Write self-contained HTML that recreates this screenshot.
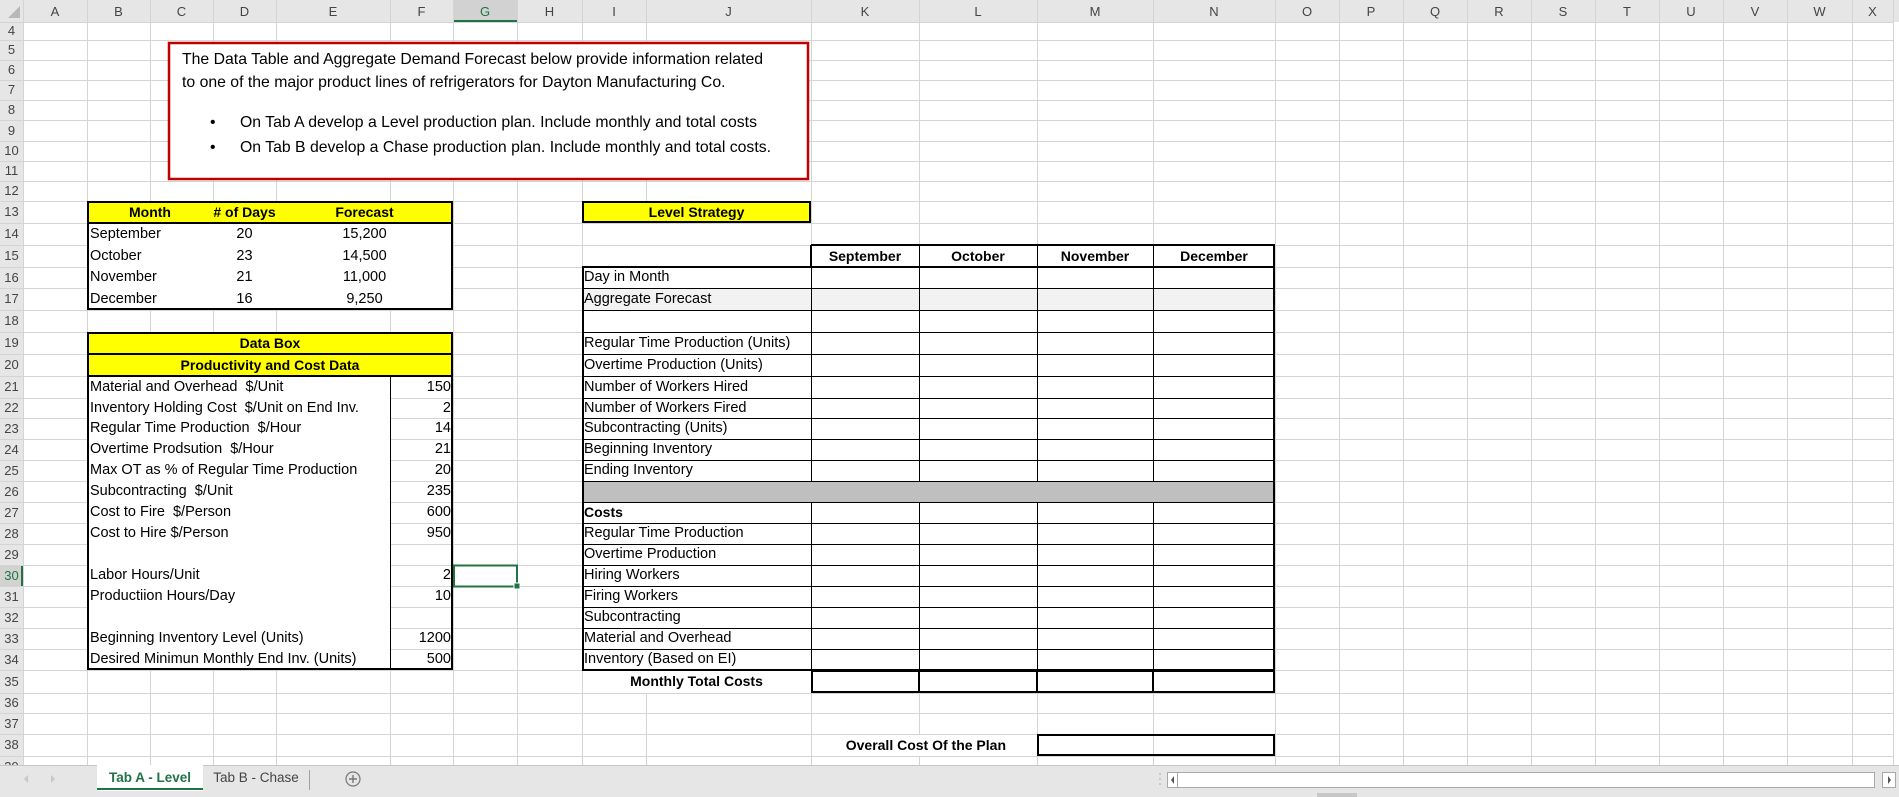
<!DOCTYPE html>
<html><head><meta charset="utf-8">
<style>
*{margin:0;padding:0;box-sizing:border-box}
body{width:1899px;height:797px;overflow:hidden;background:#fff;font-family:"Liberation Sans",Arial,sans-serif;position:relative;color:#000}
.t{position:absolute;white-space:nowrap;font-size:14.5px}
.c{text-align:center}
.r{text-align:right}
.b{font-weight:bold;font-size:14px}
.h{position:absolute;font-size:13px;color:#444;text-align:center;white-space:nowrap}
.x{font-size:15.8px}
</style></head><body>
<svg width="1899" height="797" style="position:absolute;left:0;top:0">
<rect x="0" y="0" width="1899" height="22" fill="#e6e6e6"/>
<rect x="0" y="0" width="23" height="765" fill="#e6e6e6"/>
<rect x="453" y="0" width="64" height="22" fill="#d2d2d2"/>
<rect x="453" y="20" width="64" height="2" fill="#217346"/>
<rect x="0" y="565" width="23" height="21" fill="#d2d2d2"/>
<rect x="21" y="565" width="2" height="21" fill="#217346"/>
<polygon points="8,18 20,18 20,6" fill="#b8b8b8"/>
<g stroke="#d4d4d4" stroke-width="1">
<path d="M23.5 0V765 M87.5 0V765 M150.5 0V765 M213.5 0V765 M276.5 0V765 M390.5 0V765 M453.5 0V765 M517.5 0V765 M582.5 0V765 M646.5 0V765 M811.5 0V765 M919.5 0V765 M1037.5 0V765 M1153.5 0V765 M1275.5 0V765 M1339.5 0V765 M1403.5 0V765 M1467.5 0V765 M1531.5 0V765 M1595.5 0V765 M1659.5 0V765 M1723.5 0V765 M1787.5 0V765 M1852.5 0V765 M1893.5 0V765"/>
<path d="M0 22.5H1893 M0 40.5H1893 M0 60.5H1893 M0 80.5H1893 M0 100.5H1893 M0 120.5H1893 M0 141.5H1893 M0 161.5H1893 M0 181.5H1893 M0 201.5H1893 M0 223.5H1893 M0 245.5H1893 M0 267.5H1893 M0 288.5H1893 M0 310.5H1893 M0 332.5H1893 M0 354.5H1893 M0 376.5H1893 M0 398.5H1893 M0 418.5H1893 M0 439.5H1893 M0 460.5H1893 M0 481.5H1893 M0 502.5H1893 M0 523.5H1893 M0 544.5H1893 M0 565.5H1893 M0 586.5H1893 M0 607.5H1893 M0 628.5H1893 M0 649.5H1893 M0 670.5H1893 M0 693.5H1893 M0 713.5H1893 M0 734.5H1893 M0 756.5H1893"/>
</g>
<rect x="88" y="224" width="365" height="86" fill="#fff"/>
<rect x="88" y="377" width="302" height="293" fill="#fff"/>
<rect x="168" y="42" width="641" height="138" fill="#fff"/>
<rect x="583" y="268" width="692" height="402" fill="#fff"/>
<rect x="583" y="246" width="228" height="21" fill="#fff"/>
<rect x="583" y="224" width="228" height="21" fill="#fff"/>
<rect x="583" y="671" width="228" height="22" fill="#fff"/>
<rect x="820" y="735" width="217" height="21" fill="#fff"/>
<rect x="87" y="201" width="366" height="22" fill="#ffff00"/>
<rect x="87" y="332" width="366" height="44" fill="#ffff00"/>
<rect x="582" y="201" width="229" height="22" fill="#ffff00"/>
<rect x="582" y="288" width="693" height="22" fill="#f2f2f2"/>
<rect x="582" y="481" width="693" height="21" fill="#bfbfbf"/>
<g stroke="#000" stroke-width="1">
<path d="M582 288.5H1275 M582 310.5H1275 M582 332.5H1275 M582 354.5H1275 M582 376.5H1275 M582 398.5H1275 M582 418.5H1275 M582 439.5H1275 M582 460.5H1275 M582 481.5H1275 M582 502.5H1275 M582 523.5H1275 M582 544.5H1275 M582 565.5H1275 M582 586.5H1275 M582 607.5H1275 M582 628.5H1275 M582 649.5H1275"/>
<path d="M811.5 267V481 M919.5 245V481 M1037.5 245V481 M1153.5 245V481 M811.5 502V693 M919.5 502V693 M1037.5 502V693 M1153.5 502V693"/>
<path d="M390.5 376V670"/>
</g>
<g stroke="#000" stroke-width="2" fill="none">
<rect x="88" y="202" width="364" height="107"/>
<path d="M87 223H453"/>
<rect x="88" y="333" width="364" height="336"/>
<path d="M87 354H453 M87 376H453"/>
<rect x="583" y="202" width="227" height="20"/>
<path d="M811 245H1275 M811 245V267 M582 267H1275 M583 267V670 M1274 245V693 M582 670H1275"/>
<rect x="812" y="671" width="462" height="21"/>
<path d="M919 670V693 M1037 670V693 M1153 670V693"/>
<rect x="1038" y="735" width="236" height="20"/>
</g>
<rect x="169" y="43" width="639" height="136" fill="none" stroke="#c00000" stroke-width="2.5"/>
<rect x="454" y="565.5" width="63" height="21" fill="none" stroke="#217346" stroke-width="2"/>
<rect x="514" y="583" width="6" height="6" fill="#217346" stroke="#fff" stroke-width="1"/>
<rect x="0" y="765" width="1899" height="32" fill="#e6e6e6"/>
<path d="M0 765.5H97 M203 765.5H1899" stroke="#c6c6c6"/>
<rect x="97" y="765" width="106" height="26" fill="#fff"/>
<rect x="97" y="788" width="106" height="2" fill="#217346"/>
<path d="M309.5 770V790" stroke="#a0a0a0"/>
<circle cx="353" cy="779" r="7" fill="none" stroke="#777" stroke-width="1.2"/>
<path d="M349 779H357 M353 775V783" stroke="#777" stroke-width="1.4"/>
<path d="M28 775L24 779L28 783Z M51 775L55 779L51 783Z" fill="#c8c8c8"/>
<path d="M1160 773V775 M1160 778V780 M1160 783V785" stroke="#aaa"/>
<rect x="1167.5" y="772.5" width="707" height="15" fill="#fff" stroke="#a8a8a8"/>
<path d="M1177.5 773V787" stroke="#a8a8a8"/>
<path d="M1174 776L1171 780L1174 784Z" fill="#555"/>
<rect x="1882.5" y="772.5" width="13" height="15" fill="#fff" stroke="#a8a8a8"/>
<path d="M1888 776L1891 780L1888 784Z" fill="#555"/>
<rect x="1317" y="793" width="40" height="4" fill="#c8c8c8"/>
</svg>

<div class="h" style="left:23px;top:2px;width:64px;line-height:20px">A</div>
<div class="h" style="left:87px;top:2px;width:63px;line-height:20px">B</div>
<div class="h" style="left:150px;top:2px;width:63px;line-height:20px">C</div>
<div class="h" style="left:213px;top:2px;width:63px;line-height:20px">D</div>
<div class="h" style="left:276px;top:2px;width:114px;line-height:20px">E</div>
<div class="h" style="left:390px;top:2px;width:63px;line-height:20px">F</div>
<div class="h" style="left:453px;top:2px;width:64px;line-height:20px;color:#217346">G</div>
<div class="h" style="left:517px;top:2px;width:65px;line-height:20px">H</div>
<div class="h" style="left:582px;top:2px;width:64px;line-height:20px">I</div>
<div class="h" style="left:646px;top:2px;width:165px;line-height:20px">J</div>
<div class="h" style="left:811px;top:2px;width:108px;line-height:20px">K</div>
<div class="h" style="left:919px;top:2px;width:118px;line-height:20px">L</div>
<div class="h" style="left:1037px;top:2px;width:116px;line-height:20px">M</div>
<div class="h" style="left:1153px;top:2px;width:122px;line-height:20px">N</div>
<div class="h" style="left:1275px;top:2px;width:64px;line-height:20px">O</div>
<div class="h" style="left:1339px;top:2px;width:64px;line-height:20px">P</div>
<div class="h" style="left:1403px;top:2px;width:64px;line-height:20px">Q</div>
<div class="h" style="left:1467px;top:2px;width:64px;line-height:20px">R</div>
<div class="h" style="left:1531px;top:2px;width:64px;line-height:20px">S</div>
<div class="h" style="left:1595px;top:2px;width:64px;line-height:20px">T</div>
<div class="h" style="left:1659px;top:2px;width:64px;line-height:20px">U</div>
<div class="h" style="left:1723px;top:2px;width:64px;line-height:20px">V</div>
<div class="h" style="left:1787px;top:2px;width:65px;line-height:20px">W</div>
<div class="h" style="left:1852px;top:2px;width:41px;line-height:20px">X</div>

<div class="h" style="left:0;top:22px;width:23px;line-height:18px">4</div>
<div class="h" style="left:0;top:40px;width:23px;line-height:20px">5</div>
<div class="h" style="left:0;top:60px;width:23px;line-height:20px">6</div>
<div class="h" style="left:0;top:80px;width:23px;line-height:20px">7</div>
<div class="h" style="left:0;top:100px;width:23px;line-height:20px">8</div>
<div class="h" style="left:0;top:120px;width:23px;line-height:21px">9</div>
<div class="h" style="left:0;top:141px;width:23px;line-height:20px">10</div>
<div class="h" style="left:0;top:161px;width:23px;line-height:20px">11</div>
<div class="h" style="left:0;top:181px;width:23px;line-height:20px">12</div>
<div class="h" style="left:0;top:201px;width:23px;line-height:22px">13</div>
<div class="h" style="left:0;top:223px;width:23px;line-height:22px">14</div>
<div class="h" style="left:0;top:245px;width:23px;line-height:22px">15</div>
<div class="h" style="left:0;top:267px;width:23px;line-height:21px">16</div>
<div class="h" style="left:0;top:288px;width:23px;line-height:22px">17</div>
<div class="h" style="left:0;top:310px;width:23px;line-height:22px">18</div>
<div class="h" style="left:0;top:332px;width:23px;line-height:22px">19</div>
<div class="h" style="left:0;top:354px;width:23px;line-height:22px">20</div>
<div class="h" style="left:0;top:376px;width:23px;line-height:22px">21</div>
<div class="h" style="left:0;top:398px;width:23px;line-height:20px">22</div>
<div class="h" style="left:0;top:418px;width:23px;line-height:21px">23</div>
<div class="h" style="left:0;top:439px;width:23px;line-height:21px">24</div>
<div class="h" style="left:0;top:460px;width:23px;line-height:21px">25</div>
<div class="h" style="left:0;top:481px;width:23px;line-height:21px">26</div>
<div class="h" style="left:0;top:502px;width:23px;line-height:21px">27</div>
<div class="h" style="left:0;top:523px;width:23px;line-height:21px">28</div>
<div class="h" style="left:0;top:544px;width:23px;line-height:21px">29</div>
<div class="h" style="left:0;top:565px;width:23px;line-height:21px;color:#217346">30</div>
<div class="h" style="left:0;top:586px;width:23px;line-height:21px">31</div>
<div class="h" style="left:0;top:607px;width:23px;line-height:21px">32</div>
<div class="h" style="left:0;top:628px;width:23px;line-height:21px">33</div>
<div class="h" style="left:0;top:649px;width:23px;line-height:21px">34</div>
<div class="h" style="left:0;top:670px;width:23px;line-height:23px">35</div>
<div class="h" style="left:0;top:693px;width:23px;line-height:20px">36</div>
<div class="h" style="left:0;top:713px;width:23px;line-height:21px">37</div>
<div class="h" style="left:0;top:734px;width:23px;line-height:22px">38</div>
<div class="h" style="left:0;top:757px;width:23px;line-height:20px;height:8px;overflow:hidden">39</div>

<div class="t x" style="left:182px;top:48px;line-height:23px">The Data Table and Aggregate Demand Forecast below provide information related<br>to one of the major product lines of refrigerators for Dayton Manufacturing Co.</div>
<div class="t x" style="left:210px;top:110px;line-height:25px">•</div>
<div class="t x" style="left:240px;top:110px;line-height:25px">On Tab A develop a Level production plan. Include monthly and total costs</div>
<div class="t x" style="left:210px;top:135px;line-height:25px">•</div>
<div class="t x" style="left:240px;top:135px;line-height:25px">On Tab B develop a Chase production plan. Include monthly and total costs.</div>

<div class="t c b" style="left:87px;top:201px;width:126px;line-height:22px">Month</div>
<div class="t c b" style="left:213px;top:201px;width:63px;line-height:22px"># of Days</div>
<div class="t c b" style="left:276px;top:201px;width:177px;line-height:22px">Forecast</div>
<div class="t" style="left:90px;top:223px;line-height:22px">September</div>
<div class="t" style="left:90px;top:245px;line-height:22px">October</div>
<div class="t" style="left:90px;top:267px;line-height:21px">November</div>
<div class="t" style="left:90px;top:288px;line-height:22px">December</div>
<div class="t c" style="left:213px;top:223px;width:63px;line-height:22px">20</div>
<div class="t c" style="left:213px;top:245px;width:63px;line-height:22px">23</div>
<div class="t c" style="left:213px;top:267px;width:63px;line-height:21px">21</div>
<div class="t c" style="left:213px;top:288px;width:63px;line-height:22px">16</div>
<div class="t c" style="left:276px;top:223px;width:177px;line-height:22px">15,200</div>
<div class="t c" style="left:276px;top:245px;width:177px;line-height:22px">14,500</div>
<div class="t c" style="left:276px;top:267px;width:177px;line-height:21px">11,000</div>
<div class="t c" style="left:276px;top:288px;width:177px;line-height:22px">9,250</div>

<div class="t c b" style="left:87px;top:332px;width:366px;line-height:22px">Data Box</div>
<div class="t c b" style="left:87px;top:354px;width:366px;line-height:22px">Productivity and Cost Data</div>
<div class="t" style="left:90px;top:376px;line-height:22px">Material and Overhead&nbsp; $/Unit</div>
<div class="t" style="left:90px;top:398px;line-height:20px">Inventory Holding Cost&nbsp; $/Unit on End Inv.</div>
<div class="t" style="left:90px;top:418px;line-height:21px">Regular Time Production&nbsp; $/Hour</div>
<div class="t" style="left:90px;top:439px;line-height:21px">Overtime Prodsution&nbsp; $/Hour</div>
<div class="t" style="left:90px;top:460px;line-height:21px">Max OT as % of Regular Time Production</div>
<div class="t" style="left:90px;top:481px;line-height:21px">Subcontracting&nbsp; $/Unit</div>
<div class="t" style="left:90px;top:502px;line-height:21px">Cost to Fire&nbsp; $/Person</div>
<div class="t" style="left:90px;top:523px;line-height:21px">Cost to Hire $/Person</div>
<div class="t" style="left:90px;top:565px;line-height:21px">Labor Hours/Unit</div>
<div class="t" style="left:90px;top:586px;line-height:21px">Productiion Hours/Day</div>
<div class="t" style="left:90px;top:628px;line-height:21px">Beginning Inventory Level (Units)</div>
<div class="t" style="left:90px;top:649px;line-height:21px">Desired Minimun Monthly End Inv. (Units)</div>
<div class="t r" style="left:390px;top:376px;width:61px;line-height:22px">150</div>
<div class="t r" style="left:390px;top:398px;width:61px;line-height:20px">2</div>
<div class="t r" style="left:390px;top:418px;width:61px;line-height:21px">14</div>
<div class="t r" style="left:390px;top:439px;width:61px;line-height:21px">21</div>
<div class="t r" style="left:390px;top:460px;width:61px;line-height:21px">20</div>
<div class="t r" style="left:390px;top:481px;width:61px;line-height:21px">235</div>
<div class="t r" style="left:390px;top:502px;width:61px;line-height:21px">600</div>
<div class="t r" style="left:390px;top:523px;width:61px;line-height:21px">950</div>
<div class="t r" style="left:390px;top:565px;width:61px;line-height:21px">2</div>
<div class="t r" style="left:390px;top:586px;width:61px;line-height:21px">10</div>
<div class="t r" style="left:390px;top:628px;width:61px;line-height:21px">1200</div>
<div class="t r" style="left:390px;top:649px;width:61px;line-height:21px">500</div>

<div class="t c b" style="left:582px;top:201px;width:229px;line-height:22px">Level Strategy</div>
<div class="t c b" style="left:811px;top:245px;width:108px;line-height:22px">September</div>
<div class="t c b" style="left:919px;top:245px;width:118px;line-height:22px">October</div>
<div class="t c b" style="left:1037px;top:245px;width:116px;line-height:22px">November</div>
<div class="t c b" style="left:1153px;top:245px;width:122px;line-height:22px">December</div>
<div class="t" style="left:584px;top:267px;line-height:21px">Day in Month</div>
<div class="t" style="left:584px;top:288px;line-height:22px">Aggregate Forecast</div>
<div class="t" style="left:584px;top:332px;line-height:22px">Regular Time Production (Units)</div>
<div class="t" style="left:584px;top:354px;line-height:22px">Overtime Production (Units)</div>
<div class="t" style="left:584px;top:376px;line-height:22px">Number of Workers Hired</div>
<div class="t" style="left:584px;top:398px;line-height:20px">Number of Workers Fired</div>
<div class="t" style="left:584px;top:418px;line-height:21px">Subcontracting (Units)</div>
<div class="t" style="left:584px;top:439px;line-height:21px">Beginning Inventory</div>
<div class="t" style="left:584px;top:460px;line-height:21px">Ending Inventory</div>
<div class="t b" style="left:584px;top:502px;line-height:21px">Costs</div>
<div class="t" style="left:584px;top:523px;line-height:21px">Regular Time Production</div>
<div class="t" style="left:584px;top:544px;line-height:21px">Overtime Production</div>
<div class="t" style="left:584px;top:565px;line-height:21px">Hiring Workers</div>
<div class="t" style="left:584px;top:586px;line-height:21px">Firing Workers</div>
<div class="t" style="left:584px;top:607px;line-height:21px">Subcontracting</div>
<div class="t" style="left:584px;top:628px;line-height:21px">Material and Overhead</div>
<div class="t" style="left:584px;top:649px;line-height:21px">Inventory (Based on EI)</div>
<div class="t c b" style="left:582px;top:670px;width:229px;line-height:23px">Monthly Total Costs</div>
<div class="t r b" style="left:700px;top:734px;width:306px;line-height:22px">Overall Cost Of the Plan</div>

<div class="t c b" style="left:97px;top:765px;width:106px;line-height:26px;color:#217346;font-size:13.5px">Tab A - Level</div>
<div class="t c" style="left:203px;top:765px;width:106px;line-height:26px;color:#444;font-size:13.5px">Tab B - Chase</div>
</body></html>
